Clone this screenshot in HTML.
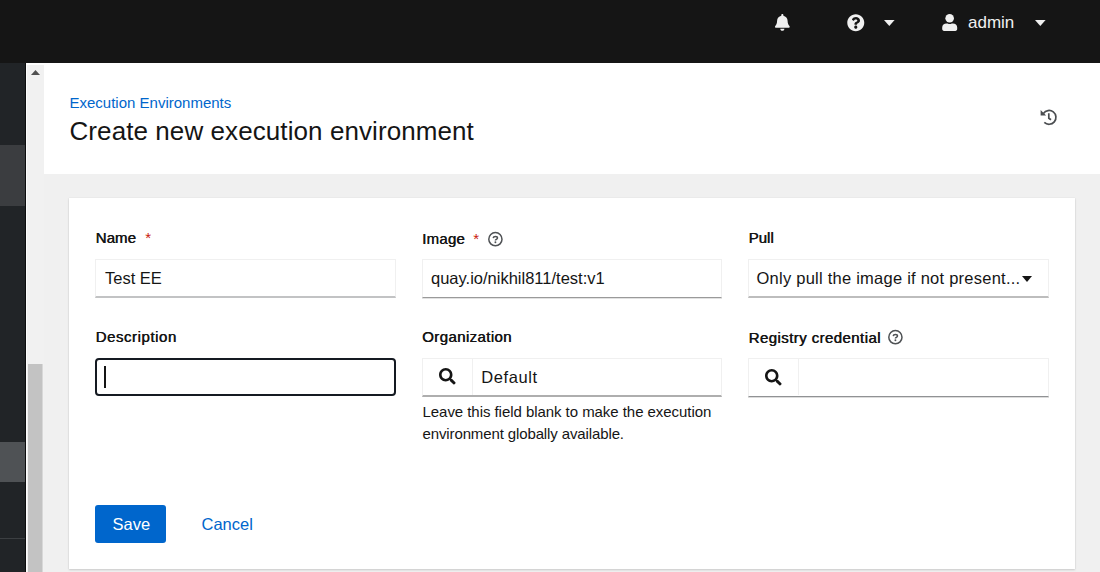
<!DOCTYPE html>
<html><head><meta charset="utf-8">
<style>
*{box-sizing:border-box;margin:0;padding:0}
html,body{width:1100px;height:572px;overflow:hidden;background:#f0f0f0;font-family:"Liberation Sans",sans-serif;color:#151515}
.abs{position:absolute}
svg{position:absolute;overflow:visible}
#hdr{left:0;top:0;width:1100px;height:63px;background:#151515}
#side{left:0;top:63px;width:26px;height:509px;background:#212427}
#sideline{left:25px;top:63px;width:1.4px;height:509px;background:#0c0d0e}
#track{left:26.4px;top:63px;width:17.6px;height:509px;background:#f1f1f1;border-left:1.6px solid #fdfdfd}
#thumb{left:28px;top:364px;width:15px;height:208px;background:#c3c3c3;border-right:1px solid #d8d8d8}
#phdr{left:44px;top:63px;width:1056px;height:111px;background:#fff}
.card{left:69px;top:198px;width:1006px;height:371px;background:#fff;box-shadow:0 1px 2px rgba(3,3,3,.15),0 0 1px rgba(3,3,3,.1)}
.t{position:absolute;white-space:nowrap;line-height:1}
.lbl{font-weight:normal;font-size:15px;text-shadow:0.45px 0 0 #151515;letter-spacing:0.25px}
.inp{position:absolute;background:#fff;border:1px solid #f0f0f0;border-bottom:2px solid #c2c3c4;height:39px}
.val{font-size:16.5px}
.req{color:#c9190b;font-size:14px}
</style></head><body>
<div id="hdr" class="abs"></div>
<div id="side" class="abs"></div>
<div class="abs" style="left:0;top:145.3px;width:25px;height:60.7px;background:#3b3d40"></div>
<div class="abs" style="left:0;top:442px;width:25px;height:40px;background:#4f5255"></div>
<div class="abs" style="left:0;top:538px;width:25px;height:1px;background:#3c3f42"></div>
<div id="sideline" class="abs"></div>
<div id="track" class="abs"></div>
<div id="thumb" class="abs"></div>
<div class="abs" style="left:27px;top:63px;width:17px;height:2px;background:#fff"></div>
<svg style="left:31px;top:70px" width="9" height="5" viewBox="0 0 9 5"><polygon points="0,5 4.5,0 9,5" fill="#505050"/></svg>
<div id="phdr" class="abs"></div>
<div class="card abs"></div>

<!-- masthead icons -->
<svg style="left:775.3px;top:13.6px" width="14.7" height="16.9" viewBox="0 0 448 512"><path fill="#f0f0f0" d="M224 512c35.32 0 63.97-28.65 63.97-64H160.03c0 35.35 28.650 64 63.97 64zm215.39-149.71c-19.32-20.76-55.47-51.99-55.47-154.29 0-77.7-54.480-139.9-127.94-155.16V32c0-17.67-14.32-32-31.98-32s-31.98 14.33-31.98 32v20.84C118.56 68.100 64.080 130.3 64.080 208c0 102.3-36.150 133.53-55.470 154.29-6 6.45-8.66 14.16-8.61 21.71.11 16.4 12.98 32 32.1 32h383.8c19.12 0 32-15.6 32.1-32 .05-7.55-2.61-15.27-8.61-21.710z"/></svg>
<svg style="left:846.6px;top:13.5px" width="17.55" height="17.55" viewBox="0 0 512 512"><path fill="#f0f0f0" d="M504 256c0 136.997-111.043 248-248 248S8 392.997 8 256C8 119.083 119.043 8 256 8s248 111.083 248 248zM262.655 90c-54.497 0-89.255 22.957-116.549 63.758-3.536 5.286-2.353 12.415 2.715 16.258l34.699 26.31c5.205 3.947 12.621 3.008 16.665-2.122 17.864-22.658 30.113-35.797 57.303-35.797 20.429 0 45.698 13.148 45.698 32.958 0 14.976-12.363 22.667-32.534 33.976C247.128 238.528 216 254.941 216 296v4c0 6.627 5.373 12 12 12h56c6.627 0 12-5.373 12-12v-1.333c0-28.462 83.186-29.647 83.186-106.667 0-58.002-60.165-102-116.531-102zM256 338c-25.365 0-46 20.635-46 46 0 25.364 20.635 46 46 46s46-20.636 46-46c0-25.365-20.635-46-46-46z"/></svg>
<svg style="left:884.2px;top:20px" width="10.6" height="6" viewBox="0 0 10.6 6"><polygon points="0,0 10.6,0 5.3,6" fill="#f0f0f0"/></svg>
<svg style="left:941.6px;top:13.6px" width="15.6" height="17.5" viewBox="0 0 15.6 17.5"><circle cx="7.65" cy="4.3" r="4.3" fill="#f0f0f0"/><path fill="#f0f0f0" d="M0.2 15.1V13.4C0.2 11.2 2.1 9.5 4.5 9.5H5.6C6.3 9.9 7 10.1 7.7 10.1S9.1 9.9 9.8 9.5H10.9C13.3 9.5 15.2 11.2 15.2 13.4V15.1C15.2 16.2 14.5 17 13.3 17H2.1C0.9 17 0.2 16.2 0.2 15.1Z"/></svg>
<div class="t" style="left:968px;top:14.3px;font-size:17px;color:#f0f0f0">admin</div>
<svg style="left:1034.8px;top:20px" width="10.6" height="6" viewBox="0 0 10.6 6"><polygon points="0,0 10.6,0 5.3,6" fill="#f0f0f0"/></svg>

<!-- page header -->
<div class="t" style="left:69.5px;top:95px;font-size:15px;color:#0066cc">Execution Environments</div>
<div class="t" style="left:69.5px;top:117.9px;font-size:26px;letter-spacing:0.08px">Create new execution environment</div>
<svg style="left:1036px;top:105px" width="25" height="25" viewBox="1036 105 25 25"><g fill="none" stroke="#4a4d50" stroke-width="1.7"><path d="M1043.4 113.4 A6.9 6.9 0 1 1 1044.3 122.4"/><polyline points="1048.8,113.2 1048.8,118.2 1051,119.8"/></g><polygon points="1040.6,109.9 1040.6,115.4 1046.1,115.4" fill="#4a4d50"/></svg>

<!-- row 1 -->
<div class="t lbl" style="left:95.5px;top:229.8px;letter-spacing:0.1px">Name</div>
<div class="t req" style="left:145.2px;top:229.6px;font-size:15px">*</div>
<div class="inp" style="left:95px;top:259px;width:301px"></div>
<div class="t val" style="left:105px;top:269.8px">Test EE</div>

<div class="t lbl" style="left:422px;top:230.6px">Image</div>
<div class="t req" style="left:473.2px;top:230.5px;font-size:15px">*</div>
<svg style="left:488px;top:231.5px" width="14.8" height="14.8" viewBox="0 0 14.8 14.8"><circle cx="7.4" cy="7.2" r="6.6" fill="none" stroke="#4f5255" stroke-width="1.5"/><path d="M5.2 6.1C5.3 5.1 6.2 4.5 7.4 4.5 8.6 4.5 9.5 5.2 9.5 6.1 9.5 7.3 7.4 7.4 7.4 8.5" fill="none" stroke="#4f5255" stroke-width="1.5"/><circle cx="7.4" cy="10.2" r="0.95" fill="#4f5255"/></svg>
<div class="inp" style="left:422px;top:259px;width:300px;height:39px;border-bottom:1px solid #9a9a9a;box-shadow:0 1px 0 #e2e2e2"></div>
<div class="t val" style="left:431px;top:269.7px">quay.io/nikhil811/test:v1</div>

<div class="t lbl" style="left:748.5px;top:229.8px;letter-spacing:0px">Pull</div>
<div class="inp" style="left:748px;top:259px;width:301px;border-bottom-color:#bdbdbd"></div>
<div class="t val" style="left:756.5px;top:269.5px;letter-spacing:0.24px">Only pull the image if not present...</div>
<svg style="left:1022px;top:275.7px" width="10" height="6" viewBox="0 0 10 6"><polygon points="0,0 10,0 5,6" fill="#151515"/></svg>

<!-- row 2 -->
<div class="t lbl" style="left:95.5px;top:329.4px;letter-spacing:0.55px">Description</div>
<div class="abs" style="left:95px;top:358px;width:301px;height:38px;border:2px solid #151a22;border-radius:4px;background:#fff"></div>
<div class="abs" style="left:104.3px;top:366px;width:1.6px;height:22px;background:#151515"></div>

<div class="t lbl" style="left:422px;top:329.4px;letter-spacing:0.4px">Organization</div>
<div class="inp" style="left:422px;top:358px;width:300px;border-bottom-color:#aeaeae"></div>
<div class="abs" style="left:472px;top:359px;width:1px;height:36px;background:#f0f0f0"></div>
<svg style="left:438.9px;top:367.9px" width="16.6" height="16.6" viewBox="0 0 512 512"><path fill="#151515" d="M505 442.7L405.3 343c-4.5-4.5-10.6-7-17-7H372c27.6-35.3 44-79.7 44-128C416 93.1 322.9 0 208 0S0 93.1 0 208s93.1 208 208 208c48.3 0 92.7-16.4 128-44v16.3c0 6.4 2.5 12.5 7 17l99.7 99.7c9.4 9.4 24.6 9.4 33.9 0l28.3-28.3c9.4-9.4 9.4-24.6.1-34zM208 336c-70.7 0-128-57.200-128-128 0-70.7 57.2-128 128-128 70.7 0 128 57.2 128 128 0 70.7-57.2 128-128 128z"/></svg>
<div class="t val" style="left:481.2px;top:368.9px;letter-spacing:0.6px">Default</div>
<div class="t" style="left:422.5px;top:404.2px;font-size:15px;letter-spacing:-0.05px">Leave this field blank to make the execution</div>
<div class="t" style="left:422.5px;top:425.5px;font-size:15px;letter-spacing:-0.12px">environment globally available.</div>

<div class="t lbl" style="left:748.5px;top:330px;letter-spacing:0.42px">Registry credential</div>
<svg style="left:888.2px;top:330.2px" width="14.8" height="14.8" viewBox="0 0 14.8 14.8"><circle cx="7.4" cy="7.2" r="6.6" fill="none" stroke="#4f5255" stroke-width="1.5"/><path d="M5.2 6.1C5.3 5.1 6.2 4.5 7.4 4.5 8.6 4.5 9.5 5.2 9.5 6.1 9.5 7.3 7.4 7.4 7.4 8.5" fill="none" stroke="#4f5255" stroke-width="1.5"/><circle cx="7.4" cy="10.2" r="0.95" fill="#4f5255"/></svg>
<div class="inp" style="left:748px;top:358px;width:301px;border-bottom:1px solid #909294;box-shadow:0 1px 0 #dcdcdc"></div>
<div class="abs" style="left:798px;top:359px;width:1px;height:36px;background:#f0f0f0"></div>
<svg style="left:765px;top:368.5px" width="16.6" height="16.6" viewBox="0 0 512 512"><path fill="#151515" d="M505 442.7L405.3 343c-4.5-4.5-10.6-7-17-7H372c27.6-35.3 44-79.7 44-128C416 93.1 322.9 0 208 0S0 93.1 0 208s93.1 208 208 208c48.3 0 92.7-16.4 128-44v16.3c0 6.4 2.5 12.5 7 17l99.7 99.7c9.4 9.4 24.6 9.4 33.9 0l28.3-28.3c9.4-9.4 9.4-24.6.1-34zM208 336c-70.7 0-128-57.200-128-128 0-70.7 57.2-128 128-128 70.7 0 128 57.2 128 128 0 70.7-57.2 128-128 128z"/></svg>

<!-- actions -->
<div class="abs" style="left:95px;top:505px;width:71px;height:38px;background:#0066cc;border-radius:3px"></div>
<div class="t" style="left:112.5px;top:515.8px;font-size:16.5px;color:#fff">Save</div>
<div class="t" style="left:201.5px;top:515.8px;font-size:16.5px;color:#0066cc">Cancel</div>
</body></html>
